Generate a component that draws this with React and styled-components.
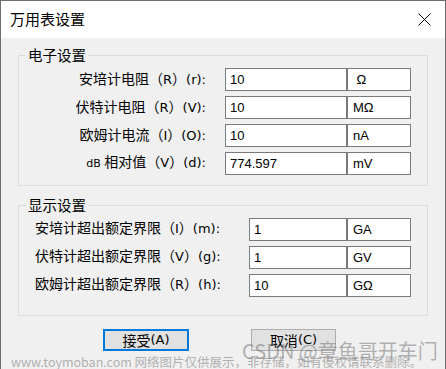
import React from 'react';
import styled, { createGlobalStyle } from 'styled-components';

const GlobalStyle = createGlobalStyle`
  html, body {
    margin: 0;
    padding: 0;
    background: #ffffff;
  }
  * {
    box-sizing: border-box;
  }
`;

const cjk = `"Noto Sans CJK SC", "Noto Sans", sans-serif`;
const latin = `"DejaVu Sans", "Noto Sans CJK SC", sans-serif`;

// upper group: labels are right-aligned next to the fields
const electronRows = [
  { cn: '安培计电阻', paren: 'R', key: 'r', value: '10', unit: ' Ω' },
  { cn: '伏特计电阻', paren: 'R', key: 'V', value: '10', unit: 'MΩ' },
  { cn: '欧姆计电流', paren: 'I', key: 'O', value: '10', unit: 'nA' },
  { prefix: 'dB ', cn: '相对值', paren: 'V', key: 'd', value: '774.597', unit: 'mV' },
];

// lower group: labels start at the left
const displayRows = [
  { cn: '安培计超出额定界限', paren: 'I', key: 'm', value: '1', unit: 'GA' },
  { cn: '伏特计超出额定界限', paren: 'V', key: 'g', value: '1', unit: 'GV' },
  { cn: '欧姆计超出额定界限', paren: 'R', key: 'h', value: '10', unit: 'GΩ' },
];

function CloseIcon() {
  return (
    <svg width="13" height="13" viewBox="0 0 13 13">
      <path d="M0.5 0.5 L12.5 12.5 M12.5 0.5 L0.5 12.5" stroke="#000" strokeWidth="1" fill="none" />
    </svg>
  );
}

function SettingRow({ row, labelWidth, align }) {
  return (
    <Row>
      <Label $width={labelWidth} $align={align}>
        {row.prefix && <Small>{row.prefix}</Small>}
        {row.cn}（<Mn>{row.paren}</Mn>）<Mn>({row.key}):</Mn>
      </Label>
      <Field>
        <ValueInput readOnly value={row.value} />
        <UnitInput readOnly value={row.unit} />
      </Field>
    </Row>
  );
}

export default function App() {
  return (
    <>
      <GlobalStyle />
      <Window>
        <TitleBar>
          <Title>万用表设置</Title>
          <CloseButton>
            <CloseIcon />
          </CloseButton>
        </TitleBar>
        <Body>
          <Group>
            <Legend>电子设置</Legend>
            <Rows>
              {electronRows.map(row => (
                <SettingRow key={row.key} row={row} labelWidth={206} align="right" />
              ))}
            </Rows>
          </Group>
          <Group $top={9} $bottom={18}>
            <Legend>显示设置</Legend>
            <Rows>
              {displayRows.map(row => (
                <SettingRow key={row.key} row={row} labelWidth={230} align="left" />
              ))}
            </Rows>
          </Group>
          <Buttons>
            <Button $primary>接受<Mn>(A)</Mn></Button>
            <Button>取消<Mn>(C)</Mn></Button>
          </Buttons>
        </Body>
        <Watermark>CSDN @章鱼哥开车门</Watermark>
        <FootMark>www.toymoban.com 网络图片仅供展示，非存储，如有侵权请联系删除。</FootMark>
      </Window>
    </>
  );
}

const Window = styled.div`
  position: relative;
  width: 446px;
  height: 369px;
  border: 1px solid #6f6f6f;
  border-bottom: none;
  display: flex;
  flex-direction: column;
  overflow: hidden;
  font-family: ${cjk};
  color: #000;
`;

const TitleBar = styled.div`
  height: 37px;
  flex: none;
  background: #ffffff;
  display: flex;
  align-items: center;
  justify-content: space-between;
  padding: 0 14px 0 9px;
`;

const Title = styled.div`
  font-size: 15px;
  line-height: 20px;
  padding-bottom: 1px;
`;

const CloseButton = styled.div`
  display: flex;
  align-items: center;
  padding-bottom: 1px;
`;

const Body = styled.div`
  flex: 1;
  background: #f0f0f0;
  padding: 7px 17px 0 17px;
`;

const Group = styled.fieldset`
  margin: ${p => p.$top || 0}px 0 0 0;
  padding: 3px 0 ${p => p.$bottom || 10}px 0;
  border: 1px solid #dcdcdc;
  min-inline-size: 0;
`;

const Legend = styled.legend`
  margin-left: 7px;
  padding: 0 2px;
  font-size: 14.5px;
  line-height: 20px;
`;

const Rows = styled.div`
  display: flex;
  flex-direction: column;
  gap: 5px;
`;

const Row = styled.div`
  display: flex;
  align-items: center;
  height: 23px;
`;

const Label = styled.div`
  width: ${p => p.$width}px;
  flex: none;
  text-align: ${p => p.$align};
  padding: ${p => (p.$align === 'left' ? '0 0 3px 16px' : '0 19px 2px 0')};
  font-size: 14px;
  line-height: 20px;
  white-space: nowrap;
`;

const Mn = styled.span`
  font-family: ${latin};
  font-size: 13px;
`;

const Small = styled.span`
  font-family: ${latin};
  font-size: 11px;
`;

const Field = styled.div`
  display: flex;
  flex: 1;
  min-width: 0;
  margin-right: 16px;
  height: 23px;
`;

const Box = styled.input`
  height: 23px;
  border: 1px solid #7a7a7a;
  background: #ffffff;
  font-family: "Liberation Sans", Arial, sans-serif;
  font-size: 13px;
  color: #000;
  outline: none;
  margin: 0;
  border-radius: 0;
`;

const ValueInput = styled(Box)`
  flex: 1;
  min-width: 0;
  padding: 0 0 0 4px;
`;

const UnitInput = styled(Box)`
  width: 64px;
  flex: none;
  padding: 0 0 0 5px;
`;

const Buttons = styled.div`
  display: flex;
  gap: 62px;
  margin-top: 13px;
  padding-left: 85px;
`;

const Button = styled.div`
  width: ${p => (p.$primary ? 86 : 85)}px;
  height: 22px;
  background: #e1e1e1;
  border: ${p => (p.$primary ? '2px solid #0078d7' : '1px solid #adadad')};
  display: flex;
  align-items: center;
  justify-content: center;
  font-size: 14px;
  line-height: 18px;
`;

const Watermark = styled.div`
  position: absolute;
  left: 241px;
  top: 338px;
  font-family: ${cjk};
  font-size: 20px;
  line-height: 24px;
  color: rgba(110, 110, 110, 0.5);
  white-space: nowrap;
  pointer-events: none;
`;

const FootMark = styled.div`
  position: absolute;
  left: 10px;
  top: 353px;
  font-family: ${cjk};
  font-size: 12.5px;
  line-height: 16px;
  color: rgba(130, 130, 130, 0.6);
  white-space: nowrap;
  pointer-events: none;
`;
